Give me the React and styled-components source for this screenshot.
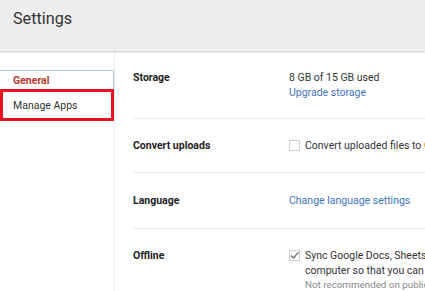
import React from 'react'
import styled, { createGlobalStyle } from 'styled-components'

const GlobalStyle = createGlobalStyle`
    html, body {
        margin: 0;
        padding: 0;
        background: #fff;
        overflow: hidden;
    }
    body {
        font-family: Roboto, "Liberation Sans", Arial, sans-serif;
        color: #222;
    }
`

const Page = styled.div`
    width: 425px;
    height: 291px;
    overflow: hidden;
    display: flex;
    flex-direction: column;
`

const Header = styled.header`
    height: 51px;
    flex-shrink: 0;
    background: #eeeeee;
    box-shadow: 0 1px 2px rgba(0, 0, 0, 0.22);
    position: relative;
    z-index: 1;
    display: flex;
    align-items: flex-start;
    padding: 8px 13px 0;
    box-sizing: border-box;
`

const Title = styled.h1`
    margin: 0;
    font-size: 16.2px;
    font-weight: 400;
    color: #333;
    line-height: 22px;
`

const Body = styled.div`
    flex: 1;
    display: flex;
    min-height: 0;
`

const Sidebar = styled.nav`
    width: 114px;
    flex-shrink: 0;
    border-right: 1px solid #ececec;
    padding-top: 19px;
`

const NavItem = styled.div`
    box-sizing: border-box;
    height: ${p => (p.$highlight ? '32px' : '19px')};
    display: flex;
    align-items: center;
    padding: ${p => (p.$highlight ? '0 0 0 10px' : '1px 0 0 13px')};
    font-size: 10.5px;
    font-weight: ${p => (p.$active ? 700 : 400)};
    color: ${p => (p.$active ? '#b5372a' : '#333')};
    border: ${p => (p.$highlight ? '3px solid #e8111f' : 'none')};
    border-top: ${p =>
        p.$highlight ? '3px solid #e8111f' : p.$active ? '1px solid #b3cbe6' : 'none'};
    border-right: ${p =>
        p.$highlight ? '3px solid #e8111f' : p.$active ? '1px solid #b3cbe6' : 'none'};
`

const Main = styled.main`
    flex: 1;
    padding-left: 18px;
    min-width: 0;
`

const Row = styled.section`
    display: flex;
    padding: ${p => p.$pad || '19px 0'};
    border-bottom: ${p => (p.$last ? 'none' : '1px solid #ebebeb')};
`

const Label = styled.div`
    width: 156px;
    flex-shrink: 0;
    font-size: 10.5px;
    font-weight: 700;
    line-height: 15px;
    color: #222;
`

const Value = styled.div`
    font-size: 10.5px;
    line-height: 15px;
    color: #333;
    white-space: nowrap;
`

const Link = styled.div`
    color: #3f72c1;
    font-size: 10.5px;
    line-height: 15px;
    white-space: nowrap;
`

const CheckLine = styled.div`
    display: flex;
    align-items: flex-start;
    gap: 5px;
`

const Box = styled.span`
    width: 11px;
    height: 11px;
    flex-shrink: 0;
    margin-top: 2px;
    display: inline-flex;
`

const Note = styled.div`
    font-size: 9.8px;
    line-height: 14px;
    color: #888;
    white-space: nowrap;
`

function Checkbox({ checked }) {
    return (
        <Box>
            <svg width="11" height="11" viewBox="0 0 11 11">
                <rect x="0.5" y="0.5" width="10" height="10" fill="#fff" stroke="#cfcfcf" />
                {checked && (
                    <path d="M2 5.5 L4.4 8 L9.6 2.2" fill="none" stroke="#666" strokeWidth="1.2" />
                )}
            </svg>
        </Box>
    )
}

export default function App() {
    return (
        <Page>
            <GlobalStyle />
            <Header>
                <Title>Settings</Title>
            </Header>
            <Body>
                <Sidebar>
                    <NavItem $active>General</NavItem>
                    <NavItem $highlight>Manage Apps</NavItem>
                </Sidebar>
                <Main>
                    <Row $pad="19px 0 18px">
                        <Label>Storage</Label>
                        <div>
                            <Value>8 GB of 15 GB used</Value>
                            <Link>Upgrade storage</Link>
                        </div>
                    </Row>
                    <Row>
                        <Label>Convert uploads</Label>
                        <CheckLine>
                            <Checkbox />
                            <Value>Convert uploaded files to Google Docs editor format</Value>
                        </CheckLine>
                    </Row>
                    <Row $pad="20px 0">
                        <Label>Language</Label>
                        <Link>Change language settings</Link>
                    </Row>
                    <Row $last $pad="19px 0">
                        <Label>Offline</Label>
                        <CheckLine>
                            <Checkbox checked />
                            <div>
                                <Value>Sync Google Docs, Sheets, Slides &amp; Drawings files to this</Value>
                                <Value>computer so that you can edit offline</Value>
                                <Note>Not recommended on public or shared computers</Note>
                            </div>
                        </CheckLine>
                    </Row>
                </Main>
            </Body>
        </Page>
    )
}
